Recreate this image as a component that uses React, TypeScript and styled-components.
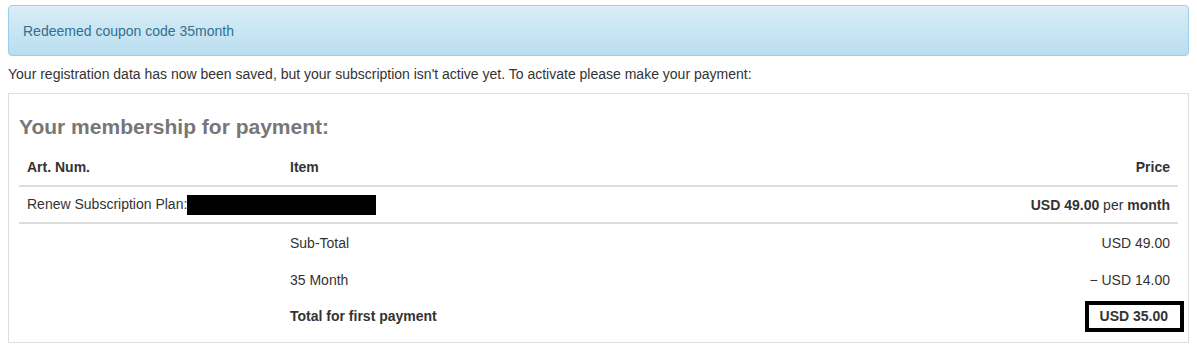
import styled, { createGlobalStyle } from "styled-components";

const GlobalStyle = createGlobalStyle`
  body {
    margin: 0;
    padding: 5px 8px;
    background: #fff;
    font-family: "Liberation Sans", Arial, sans-serif;
    font-size: 14px;
    color: #333;
  }
`;

const lines = [
  { label: "Sub-Total", price: "USD 49.00" },
  { label: "35 Month", price: "− USD 14.00" },
];

const App = () => {
  return (
    <>
      <GlobalStyle />
      <Alert>Redeemed coupon code 35month</Alert>
      <Notice>
        Your registration data has now been saved, but your subscription isn't
        active yet. To activate please make your payment:
      </Notice>
      <Panel>
        <Heading>Your membership for payment:</Heading>
        <Table>
          <colgroup>
            <col style={{ width: 263 }} />
            <col />
            <col style={{ width: 340 }} />
          </colgroup>
          <thead>
            <tr>
              <Th>Art. Num.</Th>
              <Th>Item</Th>
              <Th $right>Price</Th>
            </tr>
          </thead>
          <tbody>
            <tr>
              <Td $line>
                Renew Subscription Plan:
                <Redacted />
              </Td>
              <Td $line />
              <Td $line $right>
                <b>USD 49.00</b> per <b>month</b>
              </Td>
            </tr>
            {lines.map((l) => (
              <tr key={l.label}>
                <Td />
                <Td>{l.label}</Td>
                <Td $right>{l.price}</Td>
              </tr>
            ))}
            <tr>
              <Td $last />
              <Td $last>
                <b>Total for first payment</b>
              </Td>
              <Td $last $right>
                <TotalBox>USD 35.00</TotalBox>
              </Td>
            </tr>
          </tbody>
        </Table>
      </Panel>
    </>
  );
};

export default App;

const Alert = styled.div`
  height: 51px;
  box-sizing: border-box;
  padding: 0 14px;
  display: flex;
  align-items: center;
  border: 1px solid #9acfea;
  border-radius: 4px;
  background-image: linear-gradient(to bottom, #d9edf7 0%, #b9def0 100%);
  box-shadow: inset 0 1px 0 rgba(255, 255, 255, 0.25);
  color: #31708f;
  font-size: 14px;
`;

const Notice = styled.p`
  margin: 0;
  height: 37px;
  line-height: 36px;
`;

const Panel = styled.div`
  border: 1px solid #ddd;
  padding: 19px 10px 7px 10px;
`;

const Heading = styled.h3`
  margin: 0 0 7px 0;
  color: #777;
  font-size: 21px;
  font-weight: bold;
  line-height: 28px;
`;

const Table = styled.table`
  width: 100%;
  table-layout: fixed;
  border-collapse: collapse;
  border-spacing: 0;
`;

const Th = styled.th<{ $right?: boolean }>`
  text-align: ${(p) => (p.$right ? "right" : "left")};
  padding: 0 8px;
  height: 37px;
  font-weight: bold;
  border-bottom: 2px solid #ddd;
`;

const Td = styled.td<{ $right?: boolean; $line?: boolean; $last?: boolean }>`
  text-align: ${(p) => (p.$right ? "right" : "left")};
  padding: ${(p) => (p.$last ? "0 8px 1px" : "0 8px")};
  height: ${(p) => (p.$line ? "35px" : p.$last ? "36px" : "37px")};
  white-space: nowrap;
  border-bottom: ${(p) => (p.$line ? "2px solid #ddd" : "none")};
`;

const Redacted = styled.span`
  display: inline-block;
  width: 189px;
  height: 20px;
  background: #000;
  vertical-align: middle;
`;

const TotalBox = styled.span`
  display: inline-block;
  border: 4px solid #000;
  padding: 3px 12px 4px 11px;
  margin-right: -14px;
  font-weight: bold;
`;
